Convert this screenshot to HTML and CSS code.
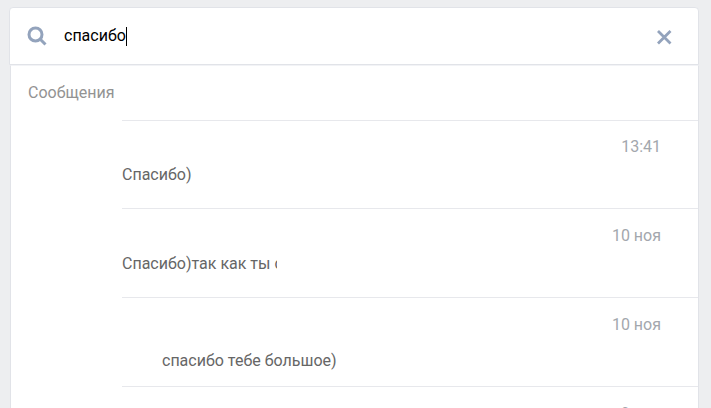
FILE: index.html
```html
<!DOCTYPE html>
<html lang="ru">
<head>
    <meta charset="UTF-8">
    <meta name="viewport" content="width=device-width, initial-scale=1.0">
    <title>Сообщения</title>
    <link rel="stylesheet" href="styles.css">
</head>
<body>
    <div class="container">
        <form class="search" role="search">
            <label class="search-icon" for="search" aria-label="Поиск">
                <svg width="20" height="20" viewBox="0 0 20 20" fill="none" stroke="#93a3bc" stroke-width="3">
                    <circle cx="8.5" cy="8.5" r="6.5"/>
                    <path d="M13 13l5.5 5.5"/>
                </svg>
            </label>
            <input class="search-input" id="search" type="text" value="спасибо" autocomplete="off">
            <span class="caret"></span>
            <button class="clear" type="button" aria-label="Очистить">
                <svg width="16" height="18" viewBox="0 0 16 18" fill="none" stroke="#93a3bc" stroke-width="2.8">
                    <path d="M2 4l12.5 12.5M14.5 4L2 16.5"/>
                </svg>
            </button>
        </form>
        <div class="results">
            <h2 class="title">Сообщения</h2>
            <ul class="messages">
                <li class="message">
                    <time class="time">13:41</time>
                    <p class="text">Спасибо)</p>
                </li>
                <li class="message">
                    <time class="time">10 ноя</time>
                    <p class="text text-cut">Спасибо)так как ты с</p>
                </li>
                <li class="message">
                    <time class="time">10 ноя</time>
                    <p class="text text-reply">спасибо тебе большое)</p>
                </li>
                <li class="message">
                    <time class="time">9 ноя</time>
                </li>
            </ul>
        </div>
    </div>
</body>
</html>
```

FILE: styles.css
```css
* {
    box-sizing: border-box;
}
body {
    margin: 0;
    padding: 7px 12px 0 9px;
    height: 100vh;
    overflow: hidden;
    background: #edeef0;
    font-family: Roboto, "Open Sans", sans-serif;
    font-size: 16px;
    line-height: 20px;
}
.search {
    display: flex;
    align-items: center;
    height: 58px;
    padding: 0 26px 0 17px;
    background: #fff;
    border: 1px solid #e1e3e8;
    border-radius: 4px 4px 0 0;
}
.search-icon {
    display: flex;
    margin-right: 17px;
}
.search-input {
    field-sizing: content;
    max-width: 80%;
    padding: 0;
    border: 0;
    outline: none;
    background: none;
    color: #000;
    caret-color: transparent;
    font: inherit;
}
.caret {
    width: 1px;
    height: 19px;
    background: #000;
}
.clear {
    display: flex;
    margin-left: auto;
    padding: 0;
    border: 0;
    background: none;
    cursor: pointer;
}
.results {
    margin-left: 1px;
    background: #fff;
    border: solid #e1e3e8;
    border-width: 1px 1px 0;
    border-top-color: #f2f3f6;
}
.title {
    margin: 0;
    padding: 17px;
    color: #939393;
    font-size: 16px;
    font-weight: 400;
}
.messages {
    margin: 0 0 0 111px;
    padding: 0;
    list-style: none;
}
.message {
    display: flex;
    flex-direction: column;
    height: 89px;
    padding: 17px 37px 0 0;
    border-bottom: 1px solid #e7e8ec;
}
.message:first-child {
    padding-top: 16px;
    border-top: 1px solid #e7e8ec;
}
.time {
    align-self: flex-end;
    color: #a3a7ad;
}
.text {
    margin: 8px 0 0;
    color: #666;
}
.text-cut {
    width: 155px;
    overflow: hidden;
    white-space: nowrap;
}
.text-reply {
    margin-top: 16px;
    padding-left: 40px;
}
```
